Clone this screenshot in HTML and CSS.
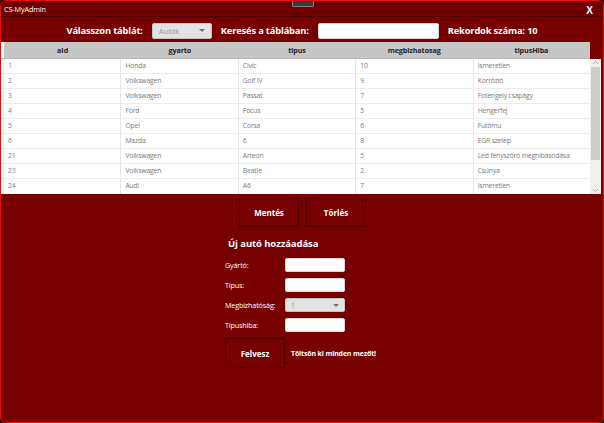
FILE: index.html
```html
<!DOCTYPE html>
<html lang="hu">
<head>
<meta charset="utf-8">
<title>CS-MyAdmin</title>
<link rel="stylesheet" href="styles.css">
</head>
<body>
<div class="window">
  <div class="titlebar">
    <span class="title">CS-MyAdmin</span>
    <span class="close">X</span>
    <span class="handle"></span>
  </div>
  <div class="toprow">
    <span class="lbl">Válasszon táblát:</span>
    <div class="combo combo-top"><span>Autók</span><span class="arrow"></span></div>
    <span class="lbl">Keresés a táblában:</span>
    <div class="textbox textbox-search"></div>
    <span class="lbl">Rekordok száma: 10</span>
  </div>
  <div class="grid">
    <div class="grid-main">
      <div class="row head">
        <div class="rh"></div>
        <div class="cell">aId</div><div class="cell">gyarto</div><div class="cell">tipus</div><div class="cell">megbizhatosag</div><div class="cell">tipusHiba</div>
      </div>
      <div class="row"><div class="rh"></div><div class="cell">1</div><div class="cell">Honda</div><div class="cell">Civic</div><div class="cell">10</div><div class="cell">Ismeretlen</div></div>
      <div class="row"><div class="rh"></div><div class="cell">2</div><div class="cell">Volkswagen</div><div class="cell">Golf IV</div><div class="cell">9</div><div class="cell">Korrózió</div></div>
      <div class="row"><div class="rh"></div><div class="cell">3</div><div class="cell">Volkswagen</div><div class="cell">Passat</div><div class="cell">7</div><div class="cell">Fotengely csapágy</div></div>
      <div class="row"><div class="rh"></div><div class="cell">4</div><div class="cell">Ford</div><div class="cell">Focus</div><div class="cell">5</div><div class="cell">Hengerfej</div></div>
      <div class="row"><div class="rh"></div><div class="cell">5</div><div class="cell">Opel</div><div class="cell">Corsa</div><div class="cell">6</div><div class="cell">Futómu</div></div>
      <div class="row"><div class="rh"></div><div class="cell">6</div><div class="cell">Mazda</div><div class="cell">6</div><div class="cell">8</div><div class="cell">EGR szelep</div></div>
      <div class="row"><div class="rh"></div><div class="cell">21</div><div class="cell">Volkswagen</div><div class="cell">Arteon</div><div class="cell">5</div><div class="cell">Led fényszóró meghibásodása</div></div>
      <div class="row"><div class="rh"></div><div class="cell">23</div><div class="cell">Volkswagen</div><div class="cell">Beatle</div><div class="cell">2</div><div class="cell">Csúnya</div></div>
      <div class="row"><div class="rh"></div><div class="cell">24</div><div class="cell">Audi</div><div class="cell">A6</div><div class="cell">7</div><div class="cell">Ismeretlen</div></div>
    </div>
    <div class="scrollcol">
      <div class="scroll-gap"></div>
      <div class="scrollbar">
        <svg class="sarrow" width="11" height="8" viewBox="0 0 11 8"><path d="M3 5 L5.5 2.5 L8 5" fill="none" stroke="#a0a0a0" stroke-width="0.8"/></svg>
        <div class="track"><div class="thumb"></div></div>
        <svg class="sarrow" width="11" height="8" viewBox="0 0 11 8"><path d="M3 3 L5.5 5.5 L8 3" fill="none" stroke="#a0a0a0" stroke-width="0.8"/></svg>
      </div>
    </div>
  </div>
  <div class="actions">
    <div class="btn">Mentés</div>
    <div class="btn">Törlés</div>
  </div>
  <div class="form">
    <div class="form-title">Új autó hozzáadása</div>
    <div class="frow first"><span class="flbl">Gyártó:</span><div class="textbox small"></div></div>
    <div class="frow"><span class="flbl">Típus:</span><div class="textbox small"></div></div>
    <div class="frow"><span class="flbl">Megbízhatóság:</span><div class="combo small"><span>1</span><span class="arrow"></span></div></div>
    <div class="frow"><span class="flbl">Típushiba:</span><div class="textbox small"></div></div>
    <div class="submit-row">
      <div class="btn btn-add">Felvesz</div>
      <span class="msg">Töltsön ki minden mezőt!</span>
    </div>
  </div>
</div>
</body>
</html>
```

FILE: styles.css
```css
* { box-sizing: border-box; }
html, body { margin: 0; padding: 0; background: #3a0a0a; }
body { width: 604px; height: 423px; overflow: hidden; font-family: "Open Sans", "Noto Sans", sans-serif; }

.window {
  width: 604px;
  height: 423px;
  background: #770000;
  border: 1px solid #e01010;
  border-radius: 6px;
  display: flex;
  flex-direction: column;
  overflow: hidden;
}

.titlebar {
  position: relative;
  height: 16px;
  flex: none;
  background: #6f0000;
  border-bottom: 1px solid #4c0000;
  display: flex;
  align-items: center;
  justify-content: space-between;
  padding: 0 10px 0 3px;
}
.title { color: #fff; font-size: 7.3px; letter-spacing: -0.15px; }
.close { color: #fff; font-size: 10px; font-weight: 700; font-family: "Liberation Sans", sans-serif; padding-top: 4px; }
.handle {
  position: absolute;
  left: 291px;
  top: -1px;
  width: 22px;
  height: 7px;
  background: #3a3a3a;
  border: 1px solid #808080;
  border-radius: 1px;
}

.toprow {
  height: 25px;
  flex: none;
  display: flex;
  align-items: center;
  justify-content: center;
  gap: 9px;
  padding: 2px 0 0 0;
}
.lbl { color: #fff; font-weight: 700; font-size: 9.3px; letter-spacing: -0.15px; }

.combo {
  display: flex;
  align-items: center;
  justify-content: space-between;
  background: #e3e3e3;
  border: 1px solid #c4c4c4;
  border-radius: 2px;
  color: #949494;
  font-size: 7.5px;
  padding: 0 6px;
}
.combo-top { width: 60px; height: 16px; }
.arrow {
  width: 0; height: 0;
  border-left: 3.5px solid transparent;
  border-right: 3.5px solid transparent;
  border-top: 3.5px solid #707070;
}
.textbox { background: #fff; border: 1px solid #d8d8d8; border-radius: 2px; }
.textbox-search { width: 121px; height: 16px; }

.grid {
  flex: none;
  height: 152px;
  margin: 0 2px 0 0;
  display: flex;
}
.grid-main { flex: 1; background: #fff; }
.row {
  display: flex;
  height: 15px;
  border-bottom: 1px solid #ececec;
}
.row:last-child { border-bottom: none; }
.rh { width: 3px; flex: none; border-right: 1px solid #e6e6e6; }
.cell {
  flex: 1;
  min-width: 0;
  font-size: 6.8px;
  color: #7a7a7a;
  line-height: 14px;
  padding-left: 4px;
  border-right: 1px solid #e6e6e6;
  white-space: nowrap;
  overflow: hidden;
  letter-spacing: -0.15px;
}
.row .cell:last-child { border-right: none; }
.head { height: 17px; background: #c6c6c6; border-bottom: 1px solid #b8b8b8; }
.head .rh { background: #fff; border-right: none; }
.head .cell {
  text-align: center;
  font-weight: 700;
  color: #222;
  line-height: 16px;
  padding-left: 0;
  border-right: none;
  font-size: 7.2px;
  letter-spacing: -0.1px;
}

.scrollcol { width: 11px; flex: none; display: flex; flex-direction: column; }
.scroll-gap { height: 17px; flex: none; }
.scrollbar { flex: 1; background: #f0f0f0; display: flex; flex-direction: column; }
.sarrow { display: block; flex: none; }
.track { flex: 1; padding: 0 1px; }
.thumb { margin-top: 0; height: 93px; background: #cdcdcd; }

.actions {
  flex: none;
  display: flex;
  justify-content: center;
  gap: 7px;
  margin-top: 3px;
  padding-left: 1px;
}
.btn {
  width: 60px;
  height: 30px;
  border: 1px solid #4d0000;
  border-radius: 1px;
  color: #fff;
  font-weight: 700;
  font-size: 8px;
  display: flex;
  align-items: center;
  justify-content: center;
}

.form {
  flex: none;
  margin-left: 224px;
  display: flex;
  flex-direction: column;
}
.form-title {
  color: #fff;
  font-weight: 700;
  font-size: 9.5px;
  margin: 10px 0 0 3px;
  height: 14px;
  line-height: 14px;
  letter-spacing: -0.1px;
}
.frow {
  display: flex;
  align-items: center;
  height: 20px;
}
.frow.first { margin-top: 4px; }
.flbl { width: 60px; color: #fff; font-size: 7.2px; letter-spacing: -0.15px; }
.small { width: 60px; height: 14px; }
.combo.small { font-size: 7px; padding: 0 5px; }

.submit-row { display: flex; align-items: center; gap: 6px; margin-top: 3px; }
.btn-add { height: 30px; }
.msg { color: #fff; font-weight: 700; font-size: 7px; letter-spacing: -0.15px; }
```
